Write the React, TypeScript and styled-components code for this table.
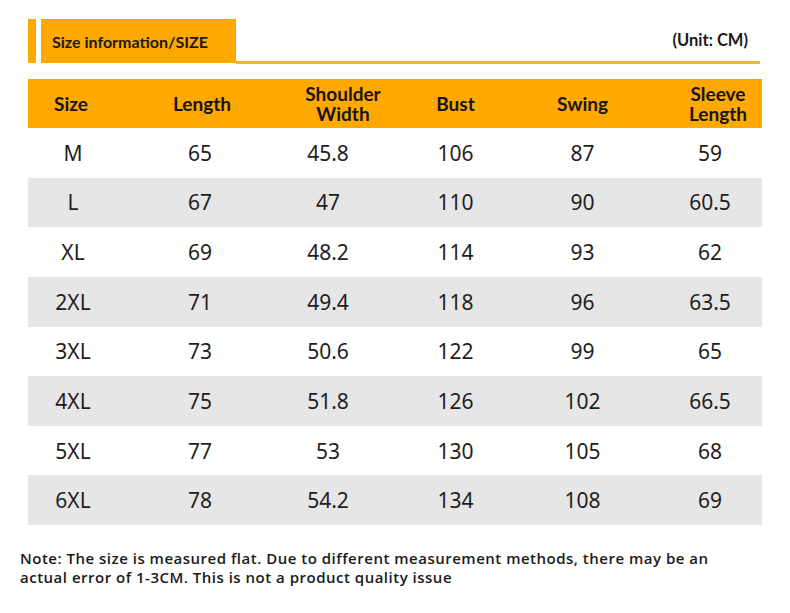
import React from "react";
import styled, { createGlobalStyle } from "styled-components";

const Global = createGlobalStyle`
  html, body { margin: 0; padding: 0; background: #ffffff; }
  body { width: 790px; height: 613px; overflow: hidden; }
`;

const ORANGE = "#FEA800";

const Page = styled.div`
  width: 790px;
  height: 613px;
  box-sizing: border-box;
  padding: 19px 0 0 28px;
  font-family: "Noto Sans", sans-serif;
`;

const TitleBar = styled.div`
  display: flex;
  align-items: flex-start;
  width: 732px;
  height: 45px;
`;

const Accent = styled.div`
  width: 8px;
  height: 44px;
  background: ${ORANGE};
  margin-right: 5px;
`;

const Tab = styled.div`
  width: 195px;
  height: 44px;
  background: ${ORANGE};
  box-sizing: border-box;
  padding-left: 11px;
  display: flex;
  align-items: center;
  font-family: Lato, sans-serif;
  font-weight: 700;
  font-size: 16px;
  color: #1a1a1a;
`;

const Rule = styled.div`
  flex: 1;
  height: 45px;
  box-sizing: border-box;
  border-bottom: 3px solid #F2B53C;
  display: flex;
  align-items: center;
  justify-content: flex-end;
  padding: 0 12px 0 0;
  font-family: Lato, sans-serif;
  font-weight: 700;
  font-size: 16.5px;
  color: #1a1a1a;
`;

const Table = styled.div`
  margin-top: 15px;
  width: 734px;
  display: grid;
  grid-template-columns: 108px 128px 128px 127px 127px 116px;
`;

const HeadCell = styled.div<{ $shift: number }>`
  height: 49px;
  background: ${ORANGE};
  display: flex;
  flex-direction: column;
  align-items: center;
  justify-content: center;
  text-align: center;
  box-sizing: border-box;
  padding-left: ${(p) => Math.max(0, p.$shift * 2)}px;
  padding-right: ${(p) => Math.max(0, -p.$shift * 2)}px;
  font-family: Lato, sans-serif;
  font-weight: 700;
  font-size: 19px;
  color: #151515;
`;

const HeadLine = styled.span`
  display: block;
  line-height: 19.5px;
  white-space: nowrap;
`;

const Cell = styled.div<{ $shift: number; $alt: boolean }>`
  height: 49.625px;
  background: ${(p) => (p.$alt ? "#E6E6E6" : "#ffffff")};
  display: flex;
  align-items: center;
  justify-content: center;
  box-sizing: border-box;
  padding-left: ${(p) => Math.max(0, p.$shift * 2)}px;
  padding-right: ${(p) => Math.max(0, -p.$shift * 2)}px;
  font-family: "Noto Sans", sans-serif;
  font-size: 21px;
  color: #1e1e1e;
`;

const Note = styled.p`
  margin: 24px 0 0 -8px;
  width: 712px;
  font-family: "Open Sans", sans-serif;
  font-weight: 600;
  font-size: 15px;
  line-height: 19px;
  letter-spacing: 0.5px;
  color: #1a1a1a;
`;

const headers: { lines: string[]; shift: number }[] = [
  { lines: ["Size"], shift: -11 },
  { lines: ["Length"], shift: 2 },
  { lines: ["Shoulder", "Width"], shift: 15 },
  { lines: ["Bust"], shift: 0 },
  { lines: ["Swing"], shift: 0 },
  { lines: ["Sleeve", "Length"], shift: 14 },
];

const dataShift = [-9, 0, 0, 0, 0, 6];

const rows: string[][] = [
  ["M", "65", "45.8", "106", "87", "59"],
  ["L", "67", "47", "110", "90", "60.5"],
  ["XL", "69", "48.2", "114", "93", "62"],
  ["2XL", "71", "49.4", "118", "96", "63.5"],
  ["3XL", "73", "50.6", "122", "99", "65"],
  ["4XL", "75", "51.8", "126", "102", "66.5"],
  ["5XL", "77", "53", "130", "105", "68"],
  ["6XL", "78", "54.2", "134", "108", "69"],
];

export default function App() {
  return (
    <>
      <Global />
      <Page>
        <TitleBar>
          <Accent />
          <Tab>Size information/SIZE</Tab>
          <Rule>(Unit: CM)</Rule>
        </TitleBar>
        <Table>
          {headers.map((h, i) => (
            <HeadCell key={i} $shift={h.shift}>
              {h.lines.map((l) => (
                <HeadLine key={l}>{l}</HeadLine>
              ))}
            </HeadCell>
          ))}
          {rows.map((r, ri) =>
            r.map((v, ci) => (
              <Cell key={`${ri}-${ci}`} $shift={dataShift[ci]} $alt={ri % 2 === 1}>
                {v}
              </Cell>
            ))
          )}
        </Table>
        <Note>
          Note: The size is measured flat. Due to different measurement methods, there may be an
          actual error of 1-3CM. This is not a product quality issue
        </Note>
      </Page>
    </>
  );
}
